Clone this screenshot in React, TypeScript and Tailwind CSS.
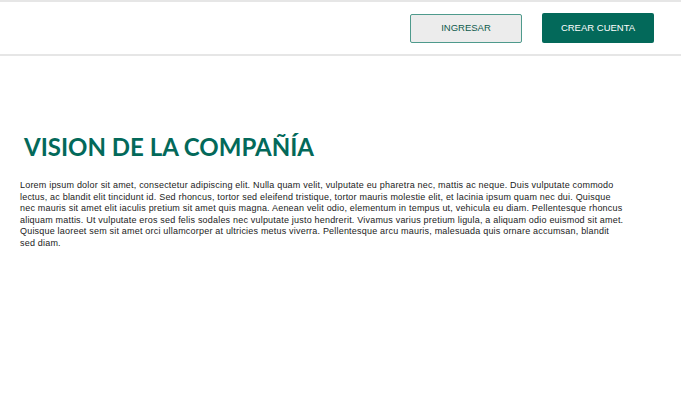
export default function App() {
  return (
    <div className="min-h-[413px] bg-white" style={{ fontFamily: '"Liberation Sans", Arial, sans-serif' }}>
      <header className="flex h-[56px] items-center justify-end gap-[20px] border-y-2 border-[#e6e6e6] pr-[27px]">
        <button
          type="button"
          className="flex h-[29px] w-[112px] items-center justify-center rounded-[2px] border border-[#4e9a8c] bg-[#ececec] text-[9.5px] text-[#0f5a4d]"
        >
          INGRESAR
        </button>
        <button
          type="button"
          className="flex h-[30px] w-[112px] items-center justify-center rounded-[2px] bg-[#03695a] text-[9.5px] text-white"
        >
          CREAR CUENTA
        </button>
      </header>

      <main className="px-[20px] pt-[76px]">
        <h1
          className="pl-[4px] text-[24px] font-bold leading-[30px] text-[#03695a]"
          style={{ fontFamily: "Lato, sans-serif" }}
        >
          VISION DE LA COMPAÑÍA
        </h1>
        <p className="mt-[18px] max-w-[604px] text-[9px] leading-[11.5px] tracking-[0.2px] text-[#222]">
          Lorem ipsum dolor sit amet, consectetur adipiscing elit. Nulla quam velit, vulputate eu pharetra nec, mattis ac neque. Duis vulputate commodo lectus, ac blandit elit tincidunt id. Sed rhoncus, tortor sed eleifend tristique, tortor mauris molestie elit, et lacinia ipsum quam nec dui. Quisque nec mauris sit amet elit iaculis pretium sit amet quis magna. Aenean velit odio, elementum in tempus ut, vehicula eu diam. Pellentesque rhoncus aliquam mattis. Ut vulputate eros sed felis sodales nec vulputate justo hendrerit. Vivamus varius pretium ligula, a aliquam odio euismod sit amet. Quisque laoreet sem sit amet orci ullamcorper at ultricies metus viverra. Pellentesque arcu mauris, malesuada quis ornare accumsan, blandit sed diam.
        </p>
      </main>
    </div>
  );
}
